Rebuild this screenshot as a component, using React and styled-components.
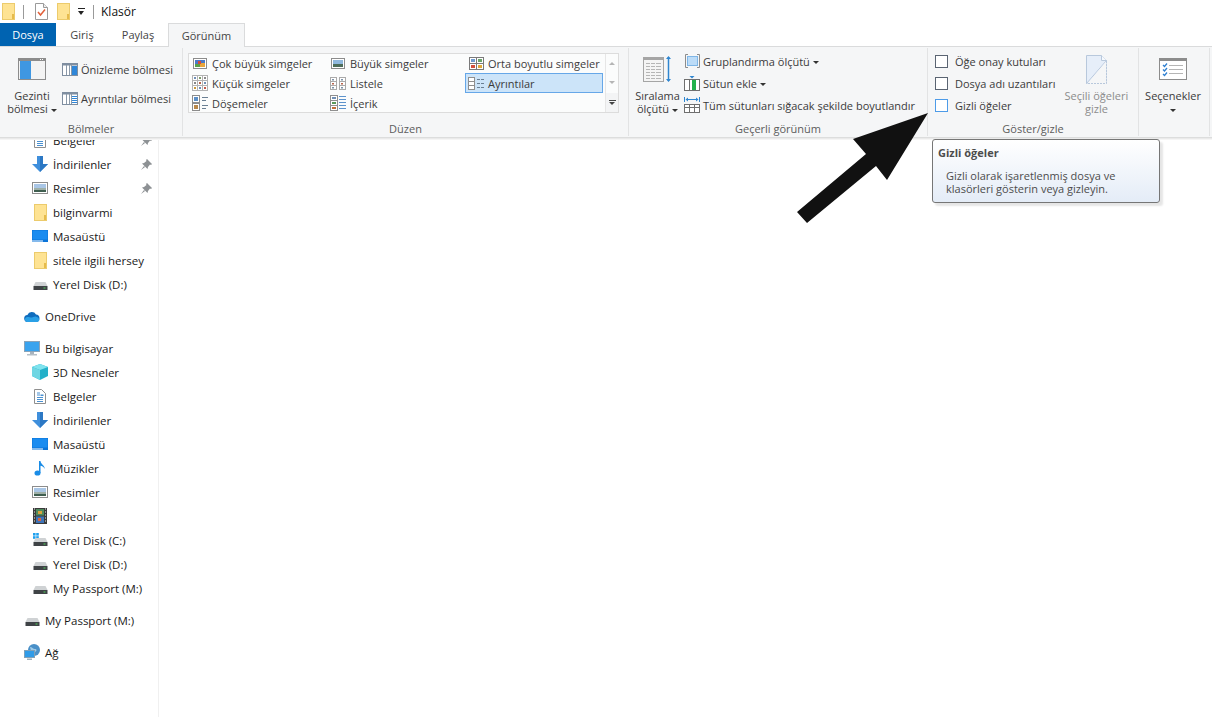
import React from "react";
import styled, { createGlobalStyle } from "styled-components";

const GlobalStyle = createGlobalStyle`
  html, body { margin: 0; padding: 0; background: #fff; }
  body {
    font-family: "Open Sans", "Noto Sans", "Liberation Sans", sans-serif;
    font-size: 11px;
    color: #1a1a1a;
  }
`;

// Icons
const Svg = ({ w = 16, h = 16, children }) => (
  <svg width={w} height={h} viewBox={`0 0 ${w} ${h}`} style={{ display: "block", flex: "none" }}>
    {children}
  </svg>
);

const FolderIcon = ({ w = 13, h = 17 }) => (
  <Svg w={w} h={h}>
    <rect x="0.5" y="0.5" width={w - 1} height={h - 1} fill="#fee393" stroke="#eccb6c" />
    <rect x={w - 3} y={h - 6} width="2" height="5" fill="#e6bb4c" />
  </Svg>
);

const CheckDocIcon = () => (
  <Svg w={13} h={17}>
    <path d="M.5.5h8l4 4v12H.5z" fill="#fff" stroke="#9a9a9a" />
    <path d="M8.5.5v4h4" fill="#eee" stroke="#9a9a9a" />
    <path d="M3 9l2.5 3L10 6.5" fill="none" stroke="#e2603a" strokeWidth="1.5" />
  </Svg>
);

const NavPaneIcon = () => (
  <Svg w={28} h={22}>
    <rect x="0.5" y="0.5" width="27" height="21" fill="#f3f3f3" stroke="#8c8c8c" />
    <rect x="1" y="1" width="26" height="2" fill="#8c8c8c" />
    <rect x="2" y="3" width="11" height="18" fill="#3f97e2" />
    <path d="M22 1.5h1M24 1.5h1" stroke="#fff" />
  </Svg>
);

const PaneIcon = ({ lines }) => (
  <Svg w={16} h={13}>
    <rect x="0.5" y="0.5" width="15" height="12" fill="#fff" stroke="#7f8ea0" />
    <rect x="1" y="1" width="14" height="1.5" fill="#7f8ea0" />
    <path d="M4.5 2v10M7.5 2v10" stroke="#8c9aa9" />
    <rect x="10" y="3" width="5" height="9" fill={lines ? "#fff" : "#2f86d8"} />
    {lines && <path d="M10 4.5h5M10 6.5h5M10 8.5h5M10 10.5h5" stroke="#2f86d8" />}
    <path d="M9.5 2v10" stroke="#8c9aa9" />
  </Svg>
);

const ExtraLargeIcon = () => (
  <Svg w={14} h={11}>
    <rect x="0.5" y="0.5" width="13" height="10" fill="#fff" stroke="#8c8c8c" />
    <rect x="2" y="2" width="10" height="7" fill="#4a79c8" />
    <rect x="2" y="6" width="5" height="3" fill="#5aa04a" />
    <rect x="7" y="5" width="5" height="4" fill="#e8a53a" />
    <rect x="5" y="3" width="3" height="3" fill="#d64a3a" />
  </Svg>
);

const LargeIcon = () => (
  <Svg w={14} h={11}>
    <rect x="0.5" y="0.5" width="13" height="10" fill="#fff" stroke="#8c8c8c" />
    <rect x="2" y="2" width="10" height="4" fill="#8fb8dd" />
    <rect x="2" y="6" width="10" height="3" fill="#4d6d5a" />
  </Svg>
);

const SmallIconsGrid = () => (
  <Svg w={16} h={16}>
    <rect x="0.5" y="0.5" width="15" height="15" fill="#fff" stroke="#b3b3b3" />
    <path d="M5.5 0v16M10.5 0v16M0 5.5h16M0 10.5h16" stroke="#b3b3b3" />
    {[
      [2, 2, "#6f8fb5"], [7, 2, "#7d9a6a"], [12, 2, "#888"],
      [2, 7, "#888"], [7, 7, "#b8654d"], [12, 7, "#6f8fb5"],
      [2, 12, "#c99a3c"], [7, 12, "#6f8fb5"], [12, 12, "#c25a4a"],
    ].map(([x, y, c]) => (
      <rect key={`${x}-${y}`} x={x} y={y} width="2" height="2" fill={c} />
    ))}
  </Svg>
);

const TilesIcon = () => (
  <Svg w={16} h={16}>
    <rect x="0.5" y="0.5" width="7" height="7" fill="#fff" stroke="#8c8c8c" />
    <rect x="2" y="2" width="4" height="4" fill="#5b8fc7" />
    <rect x="0.5" y="8.5" width="7" height="7" fill="#fff" stroke="#8c8c8c" />
    <rect x="2" y="10" width="4" height="4" fill="#b9884a" />
    <path d="M10 2.5h6M10 5.5h4M10 10.5h6M10 13.5h4" stroke="#6a7f93" />
  </Svg>
);

const MediumIcon = () => (
  <Svg w={15} h={13}>
    <rect x="0.5" y="0.5" width="14" height="12" fill="#fff" stroke="#7a7a7a" />
    <path d="M7.5 0v13M0 6.5h15" stroke="#7a7a7a" />
    <rect x="2" y="2" width="4" height="3" fill="#6f9bd0" />
    <rect x="9" y="2" width="4" height="3" fill="#6ba36a" />
    <rect x="2" y="8" width="4" height="3" fill="#d2503d" />
    <rect x="9" y="8" width="4" height="3" fill="#e0a93a" />
  </Svg>
);

const ListIcon = () => (
  <Svg w={16} h={13}>
    {[0, 9].map((x) => (
      <g key={x}>
        <rect x={x + 0.5} y="0.5" width="6" height="12" fill="#fff" stroke="#aaa" />
        <path d={`M${x} 4.5h7M${x} 8.5h7`} stroke="#aaa" />
        <rect x={x + 2} y="2" width="2" height="1.5" fill="#7d93a8" />
        <rect x={x + 2} y="6" width="2" height="1.5" fill="#b8654d" />
        <rect x={x + 2} y="10" width="2" height="1.5" fill="#7d93a8" />
      </g>
    ))}
  </Svg>
);

const DetailsIcon = () => (
  <Svg w={16} h={13}>
    <rect x="0.5" y="0.5" width="6" height="12" fill="#fff" stroke="#8f8f8f" />
    <path d="M0 4.5h7M0 8.5h7" stroke="#8f8f8f" />
    <path d="M9 2.5h3M13 2.5h3M9 6.5h3M13 6.5h3M9 10.5h3M13 10.5h3" stroke="#6a7f93" />
  </Svg>
);

const ContentIcon = () => (
  <Svg w={16} h={16}>
    <rect x="0.5" y="0.5" width="7" height="15" fill="#fff" stroke="#8f8f8f" />
    <path d="M0 5.5h8M0 10.5h8" stroke="#8f8f8f" />
    <rect x="2" y="2" width="4" height="2" fill="#6f8fb5" />
    <rect x="2" y="7" width="4" height="2" fill="#5a9a5a" />
    <rect x="2" y="12" width="4" height="2" fill="#c2703a" />
    <path d="M9 1.5h7M9 4.5h7M9 7.5h7M9 10.5h7M9 13.5h7" stroke="#5d93cc" />
  </Svg>
);

const SortIcon = () => (
  <Svg w={30} h={28}>
    <rect x="0.5" y="2.5" width="20" height="24" fill="#f4f4f4" stroke="#a5a5a5" />
    <rect x="1" y="3" width="19" height="2" fill="#a5a5a5" />
    {[8, 11, 14, 17, 20, 23].map((y) => (
      <path key={y} d={`M3 ${y}.5h4M8 ${y}.5h4M13 ${y}.5h5`} stroke="#b5b5b5" />
    ))}
    <path d="M25.5 2v24" stroke="#2f86d0" strokeWidth="1.5" />
    <path d="M23 4l2.5-3L28 4zM23 24l2.5 3L28 24z" fill="#2f86d0" />
  </Svg>
);

const GroupByIcon = () => (
  <Svg w={16} h={14}>
    <rect x="3.5" y="2.5" width="10" height="9" fill="#bcdcf8" stroke="#7fb6e6" />
    <path d="M4 .5H1.5v13H4M13 .5h2.5v13H13" fill="none" stroke="#8c8c8c" />
  </Svg>
);

const AddColumnIcon = () => (
  <Svg w={16} h={15}>
    <path d="M5.5 0h5L8 2.5z" fill="#2f86d0" />
    <rect x="0.5" y="3.5" width="15" height="11" fill="#fff" stroke="#6f6f6f" />
    <path d="M5.5 3v12" stroke="#6f6f6f" />
    <rect x="8" y="4" width="4" height="10" fill="#22b14c" />
  </Svg>
);

const FitColumnsIcon = () => (
  <Svg w={16} h={16}>
    <path d="M.5 0v5M15.5 0v5M2 2.5h12" stroke="#2f86d0" />
    <path d="M4 .5L1.5 2.5 4 4.5zM12 .5l2.5 2L12 4.5z" fill="#2f86d0" />
    <rect x="0.5" y="7.5" width="15" height="8" fill="#fff" stroke="#6f6f6f" />
    <path d="M0 10.5h16M5.5 8v8M10.5 8v8" stroke="#6f6f6f" />
  </Svg>
);

const HideSelectedIcon = () => (
  <Svg w={21} h={29}>
    <path d="M.5.5h15l5 5v23H.5z" fill="#e6eef9" stroke="#b8c8dc" />
    <path d="M15.5.5v5h5" fill="#f6f9fd" stroke="#b8c8dc" />
    <path d="M.5 28.5L20.5 5.5" stroke="#b8c8dc" />
    <path d="M20.5 6v23H1L20.5 6z" fill="#f5f6f7" />
    <path d="M20.5 6v22.5H1" fill="none" stroke="#b8c8dc" strokeDasharray="2 1" />
  </Svg>
);

const OptionsIcon = () => (
  <Svg w={28} h={22}>
    <rect x="0.5" y="0.5" width="27" height="21" fill="#fff" stroke="#8c8c8c" />
    <rect x="1" y="1" width="26" height="2" fill="#8c8c8c" />
    <path d="M10 7.5h14M10 11.5h14M10 15.5h14" stroke="#b5b5b5" />
    <path d="M4 7l1.5 1.5L8 5.5M4 11.5L5.5 13 8 10M4 16l1.5 1.5L8 14.5" fill="none" stroke="#2f7fd0" strokeWidth="1.3" />
  </Svg>
);

const PinIcon = () => (
  <Svg w={11} h={11}>
    <path d="M6 0l5 5-1 1-1-.5L7 8l-.5 2L1 4.5 3 4l2.5-2L5 1zM3 7l-3 4 4-3z" fill="#8d9194" />
  </Svg>
);

const DocIcon = () => (
  <Svg w={12} h={15}>
    <path d="M.5.5h7l4 4v10H.5z" fill="#fff" stroke="#8f8f8f" />
    <path d="M3 4h3M3 6h3" stroke="#4a90d0" />
    <path d="M3 8.5h6M3 10.5h6M3 12.5h6" stroke="#4a90d0" />
    <rect x="6.5" y="5.5" width="3" height="1.5" fill="#4a90d0" />
  </Svg>
);

const DownloadIcon = () => (
  <Svg w={16} h={16}>
    <path d="M5 0h6v8h5l-8 8-8-8h5z" fill="#3f8fdc" />
    <path d="M8 0h3v8h5l-8 8z" fill="#2c78c4" />
  </Svg>
);

const PicturesIcon = () => (
  <Svg w={16} h={12}>
    <rect x="0.5" y="0.5" width="15" height="11" fill="#fff" stroke="#8c8c8c" />
    <rect x="2" y="2" width="12" height="4" fill="#a9c6e6" />
    <rect x="2" y="6" width="12" height="2" fill="#9fb0a8" />
    <rect x="2" y="8" width="12" height="2" fill="#3f5f50" />
  </Svg>
);

const DesktopIcon = () => (
  <Svg w={16} h={12}>
    <rect width="16" height="12" fill="#0a74d9" />
    <rect x="0.5" y="0.5" width="15" height="9" fill="#1a8cf0" />
    <path d="M0 11h11" stroke="#fff" />
  </Svg>
);

const CloudIcon = () => (
  <Svg w={16} h={11}>
    <path d="M4 11a3.5 3.5 0 0 1-.6-7A4.8 4.8 0 0 1 12 3.5 3.8 3.8 0 0 1 12.5 11z" fill="#0f6cbd" />
    <path d="M3 11c-2-.5-3-3 -1-4.5 2-1 4 0 5 0 2 0 4-2 6-.5 3 1 3 5 0 5z" fill="#2aa0e6" />
  </Svg>
);

const MonitorIcon = () => (
  <Svg w={16} h={15}>
    <rect x="0.5" y="0.5" width="15" height="10" fill="#39a3ee" stroke="#8aa3b8" />
    <rect x="6" y="11" width="4" height="2" fill="#a8b4be" />
    <rect x="3" y="13" width="10" height="1.5" fill="#b5bfc7" />
  </Svg>
);

const CubeIcon = () => (
  <Svg w={16} h={16}>
    <path d="M8 0l8 3v9l-8 4-8-4V3z" fill="#23b0c9" />
    <path d="M0 3l8 3 8-3-8-3z" fill="#7fe3ee" />
    <path d="M0 3l8 3v10l-8-4z" fill="#6fd6e3" />
  </Svg>
);

const MusicIcon = () => (
  <Svg w={12} h={16}>
    <ellipse cx="3.5" cy="13" rx="3" ry="2.6" fill="#1a8ce6" />
    <path d="M5 1h1.5c0 3 4 4 4.5 8-1-2-3-3-4.5-3.2V13H5z" fill="#1a8ce6" />
  </Svg>
);

const VideoIcon = () => (
  <Svg w={14} h={16}>
    <rect width="14" height="16" fill="#3a3a3a" />
    {[1, 4, 7, 10, 13].map((y) => (
      <path key={y} d={`M1 ${y}h1M12 ${y}h1`} stroke="#eee" />
    ))}
    <rect x="3" y="1" width="8" height="6.5" fill="#4f8a5c" />
    <rect x="5" y="3" width="4" height="3" fill="#d8a23c" />
    <rect x="3" y="8.5" width="8" height="6.5" fill="#3f74b8" />
    <rect x="5" y="10" width="3" height="3" fill="#d8653c" />
  </Svg>
);

const DiskIcon = ({ windows }) => (
  <Svg w={15} h={14}>
    {windows && (
      <g fill="#1ea0ee">
        <rect x="0" y="0" width="2.6" height="2.6" />
        <rect x="3.2" y="0" width="2.6" height="2.6" />
        <rect x="0" y="3.2" width="2.6" height="2.6" />
        <rect x="3.2" y="3.2" width="2.6" height="2.6" />
      </g>
    )}
    <path d="M2.5 5h10l2 4H.5z" fill="#cfd2d4" />
    <rect x="0.5" y="9" width="14" height="4" fill="#3f4346" />
    <rect x="10.5" y="10.5" width="2" height="1" fill="#4fd05a" />
  </Svg>
);

const NetworkIcon = () => (
  <Svg w={16} h={16}>
    <circle cx="10" cy="6" r="6" fill="#4a90c8" />
    <path d="M6 3c2 0 3 2 5 2s2 2 0 3-3 0-4-1z" fill="#9fcbe8" />
    <rect x="0.5" y="6.5" width="10" height="7" fill="#2f9be8" stroke="#7fa0b8" />
    <rect x="3" y="14.5" width="5" height="1.5" fill="#9fb0bc" />
  </Svg>
);

const PageFrame = styled.div`
  position: relative;
  display: flex;
  flex-direction: column;
  width: 100%;
  height: 717px;
  overflow: hidden;
  background: #fff;
`;

const TitleBar = styled.div`
  display: flex;
  align-items: center;
  height: 23px;
  padding-left: 2px;
  font-size: 12px;
  color: #111;
`;

const TitleSep = styled.span`
  width: 1px;
  height: 14px;
  margin: ${(p) => p.$margin};
  background: #9a9a9a;
`;

const QuickGap = styled.span`
  width: 9px;
`;

const QuickCaret = styled.span`
  position: relative;
  width: 7px;
  height: 7px;
  margin-left: 8px;
  border-top: 1px solid #222;

  &::after {
    content: "";
    position: absolute;
    top: 2px;
    left: 0;
    border-left: 3.5px solid transparent;
    border-right: 3.5px solid transparent;
    border-top: 4px solid #222;
  }
`;

const TabRow = styled.div`
  display: flex;
  height: 23px;
`;

const Tab = styled.div`
  display: flex;
  align-items: center;
  justify-content: center;
  box-sizing: border-box;
  width: ${(p) => p.$width}px;
  height: ${(p) => (p.$active ? 24 : 23)}px;
  color: ${(p) => (p.$file ? "#fff" : "#444")};
  background: ${(p) => (p.$file ? "#0063b1" : p.$active ? "#f5f6f7" : "transparent")};
  border: ${(p) => (p.$active ? "1px solid #dadbdc" : "none")};
  border-bottom: none;
  position: relative;
  z-index: 2;
`;

const Ribbon = styled.div`
  position: relative;
  z-index: 1;
  display: flex;
  box-sizing: border-box;
  height: 91px;
  padding: 1px 0;
  background: #f5f6f7;
  border-top: 1px solid #dadbdc;
  box-shadow: 0 1px 0 #dcdddd, 0 2px 0 #eaeaea, 0 3px 0 #f5f5f5;
  color: #3b3b3b;
`;

const Group = styled.section`
  display: flex;
  flex-direction: column;
  box-sizing: border-box;
  width: ${(p) => p.$width}px;
  flex: none;
  border-right: 1px solid #e2e3e4;
`;

const GroupBody = styled.div`
  display: flex;
  flex: 1;
  padding: ${(p) => p.$padding || "2px 0 0"};
  gap: ${(p) => p.$gap || 0}px;
`;

const GroupLabel = styled.div`
  height: 16px;
  line-height: 16px;
  margin-bottom: -1px;
  text-align: center;
  color: #5c5c5c;
`;

const LargeButton = styled.div`
  display: flex;
  flex-direction: column;
  align-items: center;
  flex: none;
  width: ${(p) => p.$width}px;
  line-height: 13px;
  text-align: center;
  color: ${(p) => (p.$disabled ? "#8c8c8c" : "inherit")};
`;

const LargeIconSlot = styled.div`
  display: flex;
  align-items: center;
  justify-content: center;
  height: 38px;
  margin-bottom: 1px;
`;

const Caret = styled.span`
  display: inline-block;
  margin-left: ${(p) => (p.$flush ? 0 : 3)}px;
  vertical-align: middle;
  border-left: 3px solid transparent;
  border-right: 3px solid transparent;
  border-top: 3px solid #333;
`;

const RowStack = styled.div`
  display: flex;
  flex-direction: column;
  flex: none;
  padding-top: ${(p) => p.$top || 0}px;
`;

const SmallRow = styled.div`
  display: flex;
  align-items: center;
  height: ${(p) => p.$height || 22}px;
  gap: ${(p) => p.$gap || 3}px;
  white-space: nowrap;
`;

const Gallery = styled.div`
  display: flex;
  box-sizing: border-box;
  width: 431px;
  height: 60px;
  background: #fbfcfc;
  border: 1px solid #dcdcdc;
`;

const GalleryGrid = styled.div`
  display: grid;
  grid-template-columns: repeat(3, 138px);
  grid-auto-rows: 20px;
  margin-top: -1px;
`;

const GalleryItem = styled.div`
  display: flex;
  align-items: center;
  box-sizing: border-box;
  padding-left: ${(p) => (p.$selected ? 1 : 2)}px;
  white-space: nowrap;
  background: ${(p) => (p.$selected ? "#cce4f9" : "transparent")};
  border: ${(p) => (p.$selected ? "1px solid #66a7e8" : "none")};
`;

const GalleryIconSlot = styled.span`
  display: flex;
  align-items: center;
  justify-content: center;
  width: 18px;
  margin-right: 3px;
`;

const GalleryScroll = styled.div`
  display: flex;
  flex-direction: column;
  width: 14px;
  margin-left: 2px;
  border-left: 1px solid #e6e6e6;
`;

const ScrollCell = styled.div`
  flex: 1;
  display: flex;
  flex-direction: column;
  align-items: center;
  justify-content: center;
  gap: 1px;
  background: ${(p) => (p.$last ? "#f3f4f5" : "transparent")};
`;

const ScrollArrow = styled.span`
  border-left: 3px solid transparent;
  border-right: 3px solid transparent;
  ${(p) => (p.$up ? "border-bottom: 3px solid" : "border-top: 3px solid")} ${(p) => p.$color};
`;

const ScrollBar = styled.span`
  width: 7px;
  height: 1px;
  background: #444;
`;

const CheckBox = styled.span`
  box-sizing: border-box;
  flex: none;
  width: 13px;
  height: 13px;
  background: #fff;
  border: 1px solid ${(p) => (p.$hover ? "#4d9be8" : "#5a6472")};
`;

const Body = styled.div`
  flex: 1;
  display: flex;
  min-height: 0;
  overflow: hidden;
`;

const Sidebar = styled.nav`
  box-sizing: border-box;
  width: 159px;
  flex: none;
  border-right: 1px solid #f0f0f0;
  margin-top: 1px;
`;

const SidebarList = styled.div`
  margin-top: -10px;
`;

const SidebarSection = styled.div`
  margin-bottom: 8px;
`;

const SidebarRow = styled.div`
  display: flex;
  align-items: center;
  height: 24px;
  padding-left: ${(p) => (p.$top ? 24 : 32)}px;
  font-size: 11.5px;
  color: #1a1a1a;
  white-space: nowrap;
`;

const SidebarIconSlot = styled.span`
  display: flex;
  align-items: center;
  justify-content: center;
  width: 16px;
  margin-right: 5px;
`;

const PinSlot = styled.span`
  margin-left: auto;
  margin-right: 6px;
`;

const ArrowOverlay = styled.svg`
  position: absolute;
  top: 0;
  left: 0;
  z-index: 5;
  pointer-events: none;
`;

const Tooltip = styled.div`
  position: absolute;
  z-index: 6;
  top: 139px;
  left: 932px;
  box-sizing: border-box;
  width: 228px;
  height: 64px;
  padding: 6px 5px;
  border: 1px solid #767676;
  border-radius: 3px;
  background: linear-gradient(#ffffff, #e4ecf7);
  box-shadow: 3px 3px 2px rgba(0, 0, 0, 0.1);
  color: #4c4c4c;
  line-height: 13px;
`;

const TooltipTitle = styled.div`
  font-weight: 700;
  margin-bottom: 10px;
`;

const TooltipText = styled.div`
  padding-left: 8px;
`;

const galleryItems = [
  { label: "Çok büyük simgeler", icon: <ExtraLargeIcon /> },
  { label: "Büyük simgeler", icon: <LargeIcon /> },
  { label: "Orta boyutlu simgeler", icon: <MediumIcon /> },
  { label: "Küçük simgeler", icon: <SmallIconsGrid /> },
  { label: "Listele", icon: <ListIcon /> },
  { label: "Ayrıntılar", icon: <DetailsIcon />, selected: true },
  { label: "Döşemeler", icon: <TilesIcon /> },
  { label: "İçerik", icon: <ContentIcon /> },
];

const sidebar = [
  [
    { label: "Belgeler", icon: <DocIcon />, pin: true },
    { label: "İndirilenler", icon: <DownloadIcon />, pin: true },
    { label: "Resimler", icon: <PicturesIcon />, pin: true },
    { label: "bilginvarmi", icon: <FolderIcon /> },
    { label: "Masaüstü", icon: <DesktopIcon /> },
    { label: "sitele ilgili hersey", icon: <FolderIcon /> },
    { label: "Yerel Disk (D:)", icon: <DiskIcon /> },
  ],
  [{ label: "OneDrive", icon: <CloudIcon />, top: true }],
  [
    { label: "Bu bilgisayar", icon: <MonitorIcon />, top: true },
    { label: "3D Nesneler", icon: <CubeIcon /> },
    { label: "Belgeler", icon: <DocIcon /> },
    { label: "İndirilenler", icon: <DownloadIcon /> },
    { label: "Masaüstü", icon: <DesktopIcon /> },
    { label: "Müzikler", icon: <MusicIcon /> },
    { label: "Resimler", icon: <PicturesIcon /> },
    { label: "Videolar", icon: <VideoIcon /> },
    { label: "Yerel Disk (C:)", icon: <DiskIcon windows /> },
    { label: "Yerel Disk (D:)", icon: <DiskIcon /> },
    { label: "My Passport (M:)", icon: <DiskIcon /> },
  ],
  [{ label: "My Passport (M:)", icon: <DiskIcon />, top: true }],
  [{ label: "Ağ", icon: <NetworkIcon />, top: true }],
];

const App = () => (
  <PageFrame>
    <GlobalStyle />
    <TitleBar>
      <FolderIcon />
      <TitleSep $margin="0 11px 0 8px" />
      <CheckDocIcon />
      <QuickGap />
      <FolderIcon />
      <QuickCaret />
      <TitleSep $margin="0 7px 0 8px" />
      Klasör
    </TitleBar>

    <TabRow>
      <Tab $file $width={56}>Dosya</Tab>
      <Tab $width={52}>Giriş</Tab>
      <Tab $width={60}>Paylaş</Tab>
      <Tab $active $width={77}>Görünüm</Tab>
    </TabRow>

    <Ribbon>
      <Group $width={183}>
        <GroupBody $padding="2px 0 0 5px" $gap={3}>
          <LargeButton $width={54}>
            <LargeIconSlot><NavPaneIcon /></LargeIconSlot>
            Gezinti
            <span>bölmesi<Caret /></span>
          </LargeButton>
          <RowStack $top={5}>
            <SmallRow $height={29}><PaneIcon />Önizleme bölmesi</SmallRow>
            <SmallRow $height={29}><PaneIcon lines />Ayrıntılar bölmesi</SmallRow>
          </RowStack>
        </GroupBody>
        <GroupLabel>Bölmeler</GroupLabel>
      </Group>

      <Group $width={446}>
        <GroupBody $padding="5px 0 0 5px">
          <Gallery>
            <GalleryGrid>
              {galleryItems.map((item) => (
                <GalleryItem key={item.label} $selected={item.selected}>
                  <GalleryIconSlot>{item.icon}</GalleryIconSlot>
                  {item.label}
                </GalleryItem>
              ))}
            </GalleryGrid>
            <GalleryScroll>
              <ScrollCell><ScrollArrow $up $color="#b5b5b5" /></ScrollCell>
              <ScrollCell><ScrollArrow $color="#b5b5b5" /></ScrollCell>
              <ScrollCell $last>
                <ScrollBar />
                <ScrollArrow $color="#444" />
              </ScrollCell>
            </GalleryScroll>
          </Gallery>
        </GroupBody>
        <GroupLabel>Düzen</GroupLabel>
      </Group>

      <Group $width={299}>
        <GroupBody $padding="2px 0 0 4px" $gap={2}>
          <LargeButton $width={49}>
            <LargeIconSlot><SortIcon /></LargeIconSlot>
            Sıralama
            <span>ölçütü<Caret /></span>
          </LargeButton>
          <RowStack>
            <SmallRow><GroupByIcon /><span>Gruplandırma ölçütü<Caret /></span></SmallRow>
            <SmallRow><AddColumnIcon /><span>Sütun ekle<Caret /></span></SmallRow>
            <SmallRow><FitColumnsIcon />Tüm sütunları sığacak şekilde boyutlandır</SmallRow>
          </RowStack>
        </GroupBody>
        <GroupLabel>Geçerli görünüm</GroupLabel>
      </Group>

      <Group $width={211}>
        <GroupBody $padding="2px 0 0 7px" $gap={6}>
          <RowStack>
            <SmallRow $gap={7}><CheckBox />Öğe onay kutuları</SmallRow>
            <SmallRow $gap={7}><CheckBox />Dosya adı uzantıları</SmallRow>
            <SmallRow $gap={7}><CheckBox $hover />Gizli öğeler</SmallRow>
          </RowStack>
          <LargeButton $disabled $width={70}>
            <LargeIconSlot><HideSelectedIcon /></LargeIconSlot>
            Seçili öğeleri
            <span>gizle</span>
          </LargeButton>
        </GroupBody>
        <GroupLabel>Göster/gizle</GroupLabel>
      </Group>

      <Group $width={71}>
        <GroupBody>
          <LargeButton $width={68}>
            <LargeIconSlot><OptionsIcon /></LargeIconSlot>
            Seçenekler
            <span><Caret $flush /></span>
          </LargeButton>
        </GroupBody>
      </Group>
    </Ribbon>

    <Body>
      <Sidebar>
        <SidebarList>
          {sidebar.map((section, i) => (
            <SidebarSection key={i}>
              {section.map((row) => (
                <SidebarRow key={row.label} $top={row.top}>
                  <SidebarIconSlot>{row.icon}</SidebarIconSlot>
                  {row.label}
                  {row.pin && <PinSlot><PinIcon /></PinSlot>}
                </SidebarRow>
              ))}
            </SidebarSection>
          ))}
        </SidebarList>
      </Sidebar>
    </Body>

    <ArrowOverlay width="1212" height="717" viewBox="0 0 1212 717">
      <polygon points="928,113 853,139 866,154 797,212 807,223 876,166 887,180" fill="#111" />
    </ArrowOverlay>

    <Tooltip>
      <TooltipTitle>Gizli öğeler</TooltipTitle>
      <TooltipText>
        Gizli olarak işaretlenmiş dosya ve
        <br />
        klasörleri gösterin veya gizleyin.
      </TooltipText>
    </Tooltip>
  </PageFrame>
);

export default App;
